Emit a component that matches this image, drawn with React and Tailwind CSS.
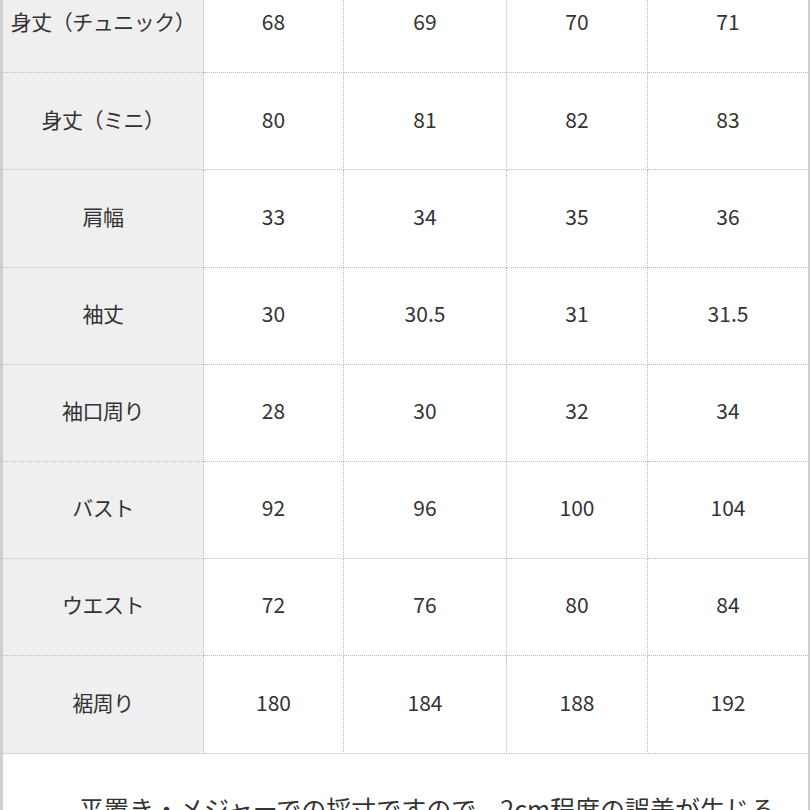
import React from "react";

const rows = [
  ["身丈（チュニック）", "68", "69", "70", "71"],
  ["身丈（ミニ）", "80", "81", "82", "83"],
  ["肩幅", "33", "34", "35", "36"],
  ["袖丈", "30", "30.5", "31", "31.5"],
  ["袖口周り", "28", "30", "32", "34"],
  ["バスト", "92", "96", "100", "104"],
  ["ウエスト", "72", "76", "80", "84"],
  ["裾周り", "180", "184", "188", "192"],
];

const App = () => {
  return (
    <div
      className="w-[810px] h-[810px] overflow-hidden bg-white text-[#333]"
      style={{ fontFamily: '"Noto Sans CJK JP", "Noto Sans", sans-serif' }}
    >
      <div className="h-full flex flex-col border-l-[3px] border-r-[2px] border-[#cfcfcf]">
        {/* size table */}
        <div className="-mt-[24px] grid grid-cols-[201px_140px_163px_141px_1fr]">
          {rows.map((row, i) =>
            row.map((cell, j) => (
              <div
                key={i + "-" + j}
                className={
                  "h-[97.2px] pb-[4px] flex items-center justify-center border-b border-dotted border-[#bdbdbd] text-[21px] " +
                  (j < 4 ? "border-r " : "") +
                  (j === 0 ? "bg-[#efefef] tracking-[-0.5px]" : "bg-white")
                }
              >
                {cell}
              </div>
            ))
          )}
        </div>

        {/* note */}
        <div className="pt-[36px] pl-[76px] text-[25px] leading-[1.5] whitespace-nowrap">
          平置き・メジャーでの採寸ですので、2cm程度の誤差が生じる
        </div>
      </div>
    </div>
  );
};

export default App;
